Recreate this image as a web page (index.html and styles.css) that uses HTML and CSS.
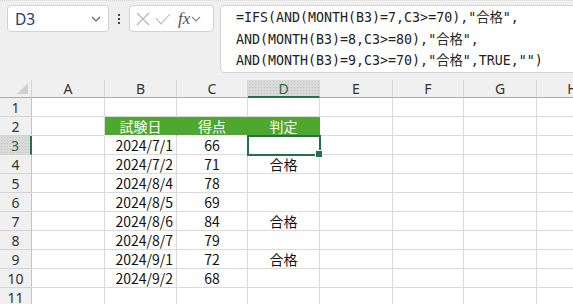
FILE: index.html
```html
<!DOCTYPE html>
<html lang="ja">
<head>
    <meta charset="UTF-8" />
    <title>IFS 合格判定</title>
    <link rel="stylesheet" href="styles.css">
</head>
<body>
    <div class="topbar">
        <div class="namebox">
            <span class="cellref">D3</span>
            <svg class="chev" width="10" height="6" viewBox="0 0 10 6"><path d="M1 1 L5 5 L9 1" fill="none" stroke="#666" stroke-width="1.2"/></svg>
        </div>
        <div class="dots"><i></i><i></i><i></i></div>
        <div class="fxbox">
            <svg width="14" height="14" viewBox="0 0 14 14"><path d="M1 1 L13 13 M13 1 L1 13" stroke="#b4b4b4" stroke-width="1.1"/></svg>
            <svg width="16" height="14" viewBox="0 0 16 14"><path d="M1 6 L6 12 L15 2" fill="none" stroke="#b4b4b4" stroke-width="1.1"/></svg>
            <span class="fx">fx</span>
            <svg class="chev" width="10" height="6" viewBox="0 0 10 6"><path d="M1 1 L5 5 L9 1" fill="none" stroke="#888" stroke-width="1.1"/></svg>
        </div>
        <div class="formula">=IFS(AND(MONTH(B3)=7,C3&gt;=70),"合格",
AND(MONTH(B3)=8,C3&gt;=80),"合格",
AND(MONTH(B3)=9,C3&gt;=70),"合格",TRUE,"")</div>
    </div>

    <div class="sheet">
        <div class="corner"></div><div class="ch">A</div><div class="ch">B</div><div class="ch">C</div><div class="ch on">D</div><div class="ch">E</div><div class="ch">F</div><div class="ch">G</div><div class="ch">H</div>

        <div class="rh">1</div><div class="c"></div><div class="c"></div><div class="c"></div><div class="c"></div><div class="c"></div><div class="c"></div><div class="c"></div><div class="c"></div>
        <div class="rh">2</div><div class="c"></div><div class="c g">試験日</div><div class="c g">得点</div><div class="c g">判定</div><div class="c"></div><div class="c"></div><div class="c"></div><div class="c"></div>
        <div class="rh on">3</div><div class="c"></div><div class="c r">2024/7/1</div><div class="c m">66</div><div class="c m sel"></div><div class="c"></div><div class="c"></div><div class="c"></div><div class="c"></div>
        <div class="rh">4</div><div class="c"></div><div class="c r">2024/7/2</div><div class="c m">71</div><div class="c m">合格</div><div class="c"></div><div class="c"></div><div class="c"></div><div class="c"></div>
        <div class="rh">5</div><div class="c"></div><div class="c r">2024/8/4</div><div class="c m">78</div><div class="c m"></div><div class="c"></div><div class="c"></div><div class="c"></div><div class="c"></div>
        <div class="rh">6</div><div class="c"></div><div class="c r">2024/8/5</div><div class="c m">69</div><div class="c m"></div><div class="c"></div><div class="c"></div><div class="c"></div><div class="c"></div>
        <div class="rh">7</div><div class="c"></div><div class="c r">2024/8/6</div><div class="c m">84</div><div class="c m">合格</div><div class="c"></div><div class="c"></div><div class="c"></div><div class="c"></div>
        <div class="rh">8</div><div class="c"></div><div class="c r">2024/8/7</div><div class="c m">79</div><div class="c m"></div><div class="c"></div><div class="c"></div><div class="c"></div><div class="c"></div>
        <div class="rh">9</div><div class="c"></div><div class="c r">2024/9/1</div><div class="c m">72</div><div class="c m">合格</div><div class="c"></div><div class="c"></div><div class="c"></div><div class="c"></div>
        <div class="rh">10</div><div class="c"></div><div class="c r">2024/9/2</div><div class="c m">68</div><div class="c m"></div><div class="c"></div><div class="c"></div><div class="c"></div><div class="c"></div>
        <div class="rh">11</div><div class="c"></div><div class="c"></div><div class="c"></div><div class="c"></div><div class="c"></div><div class="c"></div><div class="c"></div><div class="c"></div>
    </div>
</body>
</html>
```

FILE: styles.css
```css
* {
    margin: 0;
    padding: 0;
    box-sizing: border-box;
}
body {
    width: 573px;
    height: 304px;
    overflow: hidden;
    background: #fff;
    font-family: "Noto Sans", "Noto Sans CJK JP", sans-serif;
}

/* top bar */
.topbar {
    display: flex;
    align-items: flex-start;
    height: 80px;
    padding: 4px 0 0 7px;
    background: #efefef;
    border-top: 1px dotted #d8d8d8;
}
.namebox {
    width: 102px;
    height: 27px;
    display: flex;
    align-items: center;
    justify-content: space-between;
    padding: 0 7px 0 7px;
    background: #fff;
    border: 1px solid #d2d2d2;
    border-radius: 4px;
}
.cellref { font-size: 15.5px; color: #1b3f78; }
.dots {
    width: 20px;
    height: 27px;
    display: flex;
    flex-direction: column;
    align-items: center;
    justify-content: center;
    gap: 2px;
}
.dots i { width: 2px; height: 2px; background: #444; }
.fxbox {
    width: 85px;
    height: 27px;
    display: flex;
    align-items: center;
    gap: 5px;
    padding-left: 6px;
    background: #fff;
    border: 1px solid #d2d2d2;
    border-radius: 4px;
}
.fx {
    font-family: "Liberation Serif", serif;
    font-style: italic;
    font-size: 17px;
    color: #555;
    margin-left: 2px;
    margin-right: -4px;
}
.formula {
    flex: 1;
    margin-left: 6px;
    margin-right: -12px;
    height: 68px;
    padding: 1px 0 0 15px;
    background: #fff;
    border: 1px solid #d2d2d2;
    border-radius: 4px;
    white-space: pre;
    font-family: "DejaVu Sans Mono", "Noto Sans CJK JP", monospace;
    font-size: 13.3px;
    line-height: 21.5px;
    color: #222;
}

/* sheet */
.sheet {
    display: grid;
    grid-template-columns: 32px 73px 72px 71px 72px 73px 71px 73px 72px;
    grid-template-rows: 18px;
    grid-auto-rows: 19px;
    font-family: "Noto Sans CJK JP", sans-serif;
    font-size: 14px;
    color: #111;
}
.corner, .ch, .rh {
    background: #f0f0f0;
    color: #333;
    display: flex;
    align-items: center;
    justify-content: center;
}
.corner {
    position: relative;
    border-right: 1px solid #d4d4d4;
    border-bottom: 1px solid #ababab;
}
.corner::after {
    content: "";
    position: absolute;
    right: 3px;
    bottom: 3px;
    border-left: 11px solid transparent;
    border-bottom: 11px solid #d0d0d0;
}
.ch {
    font-family: "Noto Sans", sans-serif;
    font-size: 14px;
    border-right: 1px solid #d4d4d4;
    border-bottom: 1px solid #ababab;
}
.rh {
    font-family: "Noto Sans", sans-serif;
    font-size: 14px;
    border-right: 1px solid #c4c4c4;
    border-bottom: 1px solid #d4d4d4;
}
.ch.on, .rh.on {
    color: #1e6b3f;
    background-color: #d9d9d9;
    background-image: radial-gradient(#c6c6c6 0.6px, transparent 0.8px);
    background-size: 3px 3px;
}
.ch.on { border-bottom: 2px solid #217346; }
.rh.on { border-right: 2px solid #217346; }

.c {
    display: flex;
    align-items: center;
    border-right: 1px solid #dadada;
    border-bottom: 1px solid #dadada;
    white-space: nowrap;
}
.c.r { justify-content: flex-end; padding-right: 3px; }
.c.m { justify-content: center; }
.c.g {
    justify-content: center;
    background: #4ea72e;
    color: #fff;
    border-right-color: #4ea72e;
    border-bottom-color: #fff;
}
.c.sel {
    position: relative;
    outline: 2px solid #217346;
    outline-offset: -1px;
}
.c.sel::after {
    content: "";
    position: absolute;
    right: -4px;
    bottom: -4px;
    width: 6px;
    height: 6px;
    background: #217346;
    border: 1px solid #fff;
}
```
